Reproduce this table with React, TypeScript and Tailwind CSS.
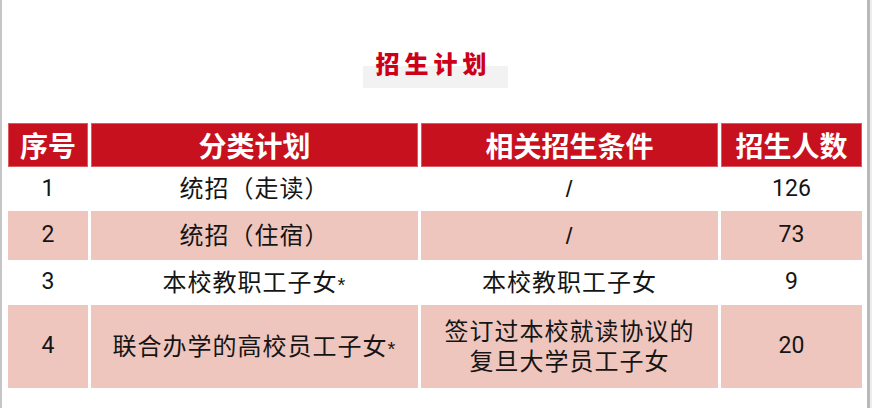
const rows = [
  { no: "1", plan: "统招（走读）", star: false, cond: ["/"], count: "126", pink: false, h: "h-[40px]" },
  { no: "2", plan: "统招（住宿）", star: false, cond: ["/"], count: "73", pink: true, h: "h-[49px]" },
  { no: "3", plan: "本校教职工子女", star: true, cond: ["本校教职工子女"], count: "9", pink: false, h: "h-[41px]" },
  {
    no: "4",
    plan: "联合办学的高校员工子女",
    star: true,
    cond: ["签订过本校就读协议的", "复旦大学员工子女"],
    count: "20",
    pink: true,
    h: "h-[83px]",
  },
];

const headers = ["序号", "分类计划", "相关招生条件", "招生人数"];

export default function App() {
  return (
    <div className="flex h-[408px] w-[872px] bg-white font-['Liberation_Sans','Noto_Sans_CJK_SC',sans-serif]">
      <div className="w-[2px] bg-[#c6c6c6]" />
      <div className="flex flex-1 flex-col pl-[6px] pt-[52px]">
        <div className="flex justify-center pr-[5px]">
          <div className="h-[36px] bg-[linear-gradient(to_bottom,transparent_14px,#f2f2f2_14px)] pl-[13px] pr-[16px] font-['Noto_Sans_CJK_SC',sans-serif] text-[24px] leading-[22px] font-black tracking-[5px] text-[#cc0018]">
            招生计划
          </div>
        </div>

        <div className="mt-[35px] grid grid-cols-[80px_327px_297px_141px] gap-x-[3px] gap-y-[2px]">
          {headers.map((h) => (
            <div
              key={h}
              className="flex h-[44px] items-center justify-center border border-[#dc5a64] bg-[#c8111f] font-['Noto_Sans_CJK_SC',sans-serif] text-[28px] font-bold text-white"
            >
              {h}
            </div>
          ))}

          {rows.map((r) => {
            const bg = r.pink ? "bg-[#efc6be]" : "bg-white";
            const cell = `flex ${r.h} ${bg} items-center justify-center text-[#151515]`;
            return [
              <div key={r.no + "a"} className={`${cell} font-['Roboto',sans-serif] text-[23px]`}>
                {r.no}
              </div>,
              <div key={r.no + "b"} className={`${cell} text-[24px] tracking-[1px]`}>
                {r.plan}
                {r.star && <span className="mt-[5px] text-[20px]">*</span>}
              </div>,
              <div key={r.no + "c"} className={`${cell} flex-col text-[24px] leading-[30px] tracking-[1px]`}>
                {r.cond.map((c) => (
                  <span key={c}>{c}</span>
                ))}
              </div>,
              <div key={r.no + "d"} className={`${cell} font-['Roboto',sans-serif] text-[23px]`}>
                {r.count}
              </div>,
            ];
          })}
        </div>
      </div>
      <div className="w-[3px] bg-[#b9b9b9]" />
      <div className="w-[2px] bg-[#ededed]" />
    </div>
  );
}
